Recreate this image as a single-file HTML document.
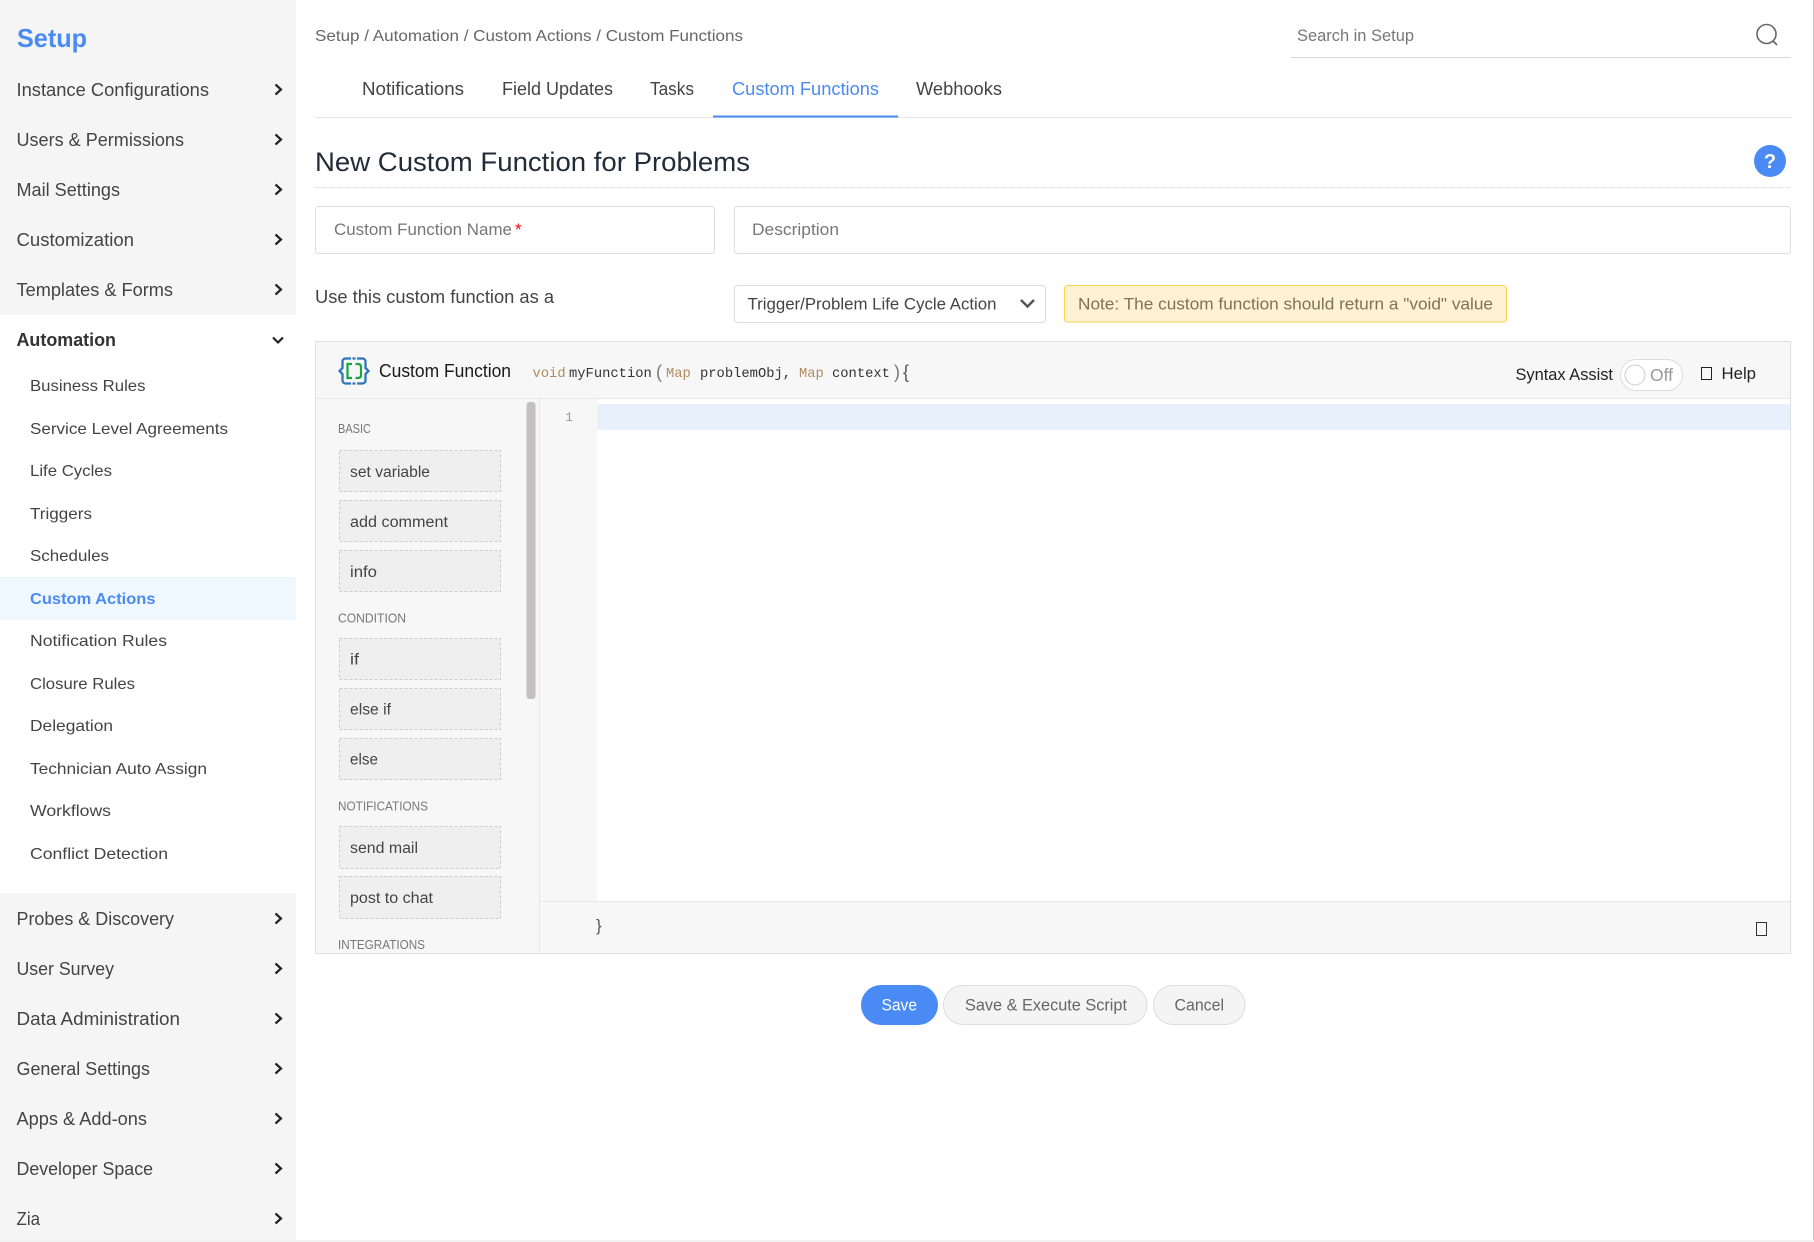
<!DOCTYPE html>
<html lang="en">
<head>
<meta charset="utf-8">
<title>New Custom Function for Problems</title>
<style>
html,body{margin:0;padding:0;background:#fff;width:1814px;height:1242px;overflow:hidden}
svg{display:block}
text{font-family:"Liberation Sans",sans-serif;white-space:pre}
.side{font-size:18.5px;fill:#444}
.sub{font-size:16px;fill:#444}
.tab{font-size:18.5px;fill:#444}
.ph{font-size:16.5px;fill:#777}
.lab{font-size:12.5px;fill:#777}
.itm{font-size:15.5px;fill:#444}
.mono{font-family:"Liberation Mono",monospace;font-size:13.8px;fill:#333}
.kw{fill:#b08a5e}
.box{fill:#efefef;stroke:#ccc;stroke-width:1;stroke-dasharray:3 2}
.chev{fill:none;stroke:#222;stroke-width:2.2}
</style>
</head>
<body>
<svg xmlns="http://www.w3.org/2000/svg" width="1814" height="1242" viewBox="0 0 1814 1242">
<rect width="1814" height="1242" fill="#fff"/>
<!-- sidebar -->
<rect x="0" y="0" width="296" height="315" fill="#f5f5f5"/>
<rect x="0" y="893" width="296" height="349" fill="#f5f5f5"/>
<rect x="0" y="577" width="296" height="43" fill="#f0f8ff"/>
<text x="17" y="47" font-size="26px" font-weight="bold" fill="#4a8af4" textLength="70" lengthAdjust="spacingAndGlyphs">Setup</text>
<text class="side" x="16.5" y="96" textLength="192.5" lengthAdjust="spacingAndGlyphs">Instance Configurations</text>
<text class="side" x="16.5" y="146" textLength="167.5" lengthAdjust="spacingAndGlyphs">Users &amp; Permissions</text>
<text class="side" x="16.5" y="196" textLength="103.5" lengthAdjust="spacingAndGlyphs">Mail Settings</text>
<text class="side" x="16.5" y="246" textLength="117.5" lengthAdjust="spacingAndGlyphs">Customization</text>
<text class="side" x="16.5" y="296" textLength="156.5" lengthAdjust="spacingAndGlyphs">Templates &amp; Forms</text>
<text class="side" x="16.5" y="346" font-weight="bold" style="fill:#333" textLength="99.5" lengthAdjust="spacingAndGlyphs">Automation</text>
<text class="sub" x="30" y="391" textLength="115.5" lengthAdjust="spacingAndGlyphs">Business Rules</text>
<text class="sub" x="30" y="434" textLength="198" lengthAdjust="spacingAndGlyphs">Service Level Agreements</text>
<text class="sub" x="30" y="476" textLength="82" lengthAdjust="spacingAndGlyphs">Life Cycles</text>
<text class="sub" x="30" y="519" textLength="62" lengthAdjust="spacingAndGlyphs">Triggers</text>
<text class="sub" x="30" y="561" textLength="79" lengthAdjust="spacingAndGlyphs">Schedules</text>
<text class="sub" x="30" y="604" font-weight="bold" style="fill:#4a8af4" textLength="125.5" lengthAdjust="spacingAndGlyphs">Custom Actions</text>
<text class="sub" x="30" y="646" textLength="137" lengthAdjust="spacingAndGlyphs">Notification Rules</text>
<text class="sub" x="30" y="689" textLength="105" lengthAdjust="spacingAndGlyphs">Closure Rules</text>
<text class="sub" x="30" y="731" textLength="83" lengthAdjust="spacingAndGlyphs">Delegation</text>
<text class="sub" x="30" y="774" textLength="177" lengthAdjust="spacingAndGlyphs">Technician Auto Assign</text>
<text class="sub" x="30" y="816" textLength="81" lengthAdjust="spacingAndGlyphs">Workflows</text>
<text class="sub" x="30" y="859" textLength="138" lengthAdjust="spacingAndGlyphs">Conflict Detection</text>
<text class="side" x="16.5" y="925" textLength="157.5" lengthAdjust="spacingAndGlyphs">Probes &amp; Discovery</text>
<text class="side" x="16.5" y="975" textLength="97.5" lengthAdjust="spacingAndGlyphs">User Survey</text>
<text class="side" x="16.5" y="1025" textLength="163.5" lengthAdjust="spacingAndGlyphs">Data Administration</text>
<text class="side" x="16.5" y="1075" textLength="133.5" lengthAdjust="spacingAndGlyphs">General Settings</text>
<text class="side" x="16.5" y="1125" textLength="130.5" lengthAdjust="spacingAndGlyphs">Apps &amp; Add-ons</text>
<text class="side" x="16.5" y="1175" textLength="136.5" lengthAdjust="spacingAndGlyphs">Developer Space</text>
<text class="side" x="16.5" y="1225" textLength="23.5" lengthAdjust="spacingAndGlyphs">Zia</text>
<g class="chev">
<path d="M275.500 84.500l5.500 5-5.500 5"/><path d="M275.500 134.500l5.500 5-5.500 5"/><path d="M275.500 184.500l5.500 5-5.500 5"/><path d="M275.500 234.500l5.500 5-5.500 5"/><path d="M275.500 284.500l5.500 5-5.500 5"/>
<path d="M273 337.500l5 5 5-5"/>
<path d="M275.500 913.500l5.500 5-5.500 5"/><path d="M275.500 963.500l5.500 5-5.500 5"/><path d="M275.500 1013.500l5.500 5-5.500 5"/><path d="M275.500 1063.500l5.500 5-5.500 5"/><path d="M275.500 1113.500l5.500 5-5.500 5"/><path d="M275.500 1163.500l5.500 5-5.500 5"/><path d="M275.500 1213.500l5.500 5-5.500 5"/>
</g>
<!-- top -->
<text x="315" y="41" font-size="16px" fill="#666" textLength="428" lengthAdjust="spacingAndGlyphs">Setup / Automation / Custom Actions / Custom Functions</text>
<text x="1297" y="41" class="ph" textLength="117" lengthAdjust="spacingAndGlyphs">Search in Setup</text>
<rect x="1291" y="57" width="500" height="1" fill="#d8d8d8"/>
<circle cx="1766.500" cy="34" r="9.500" fill="none" stroke="#666" stroke-width="1.600"/>
<path d="M1773 41l4 4" stroke="#666" stroke-width="1.600" fill="none"/>
<text class="tab" x="362" y="95" textLength="102" lengthAdjust="spacingAndGlyphs">Notifications</text>
<text class="tab" x="502" y="95" textLength="111" lengthAdjust="spacingAndGlyphs">Field Updates</text>
<text class="tab" x="650" y="95" textLength="44" lengthAdjust="spacingAndGlyphs">Tasks</text>
<text class="tab" x="732" y="95" style="fill:#4a8af4" textLength="147" lengthAdjust="spacingAndGlyphs">Custom Functions</text>
<text class="tab" x="916" y="95" textLength="86" lengthAdjust="spacingAndGlyphs">Webhooks</text>
<rect x="315" y="117" width="1476" height="1" fill="#e6e6e6"/>
<rect x="713" y="115.500" width="185" height="2" fill="#4a8af4"/>
<text x="315" y="171" font-size="27px" fill="#222c38" textLength="435" lengthAdjust="spacingAndGlyphs">New Custom Function for Problems</text>
<line x1="315" y1="187.500" x2="1791" y2="187.500" stroke="#d4d4d4" stroke-width="1" stroke-dasharray="1 1"/>
<circle cx="1770" cy="161" r="16" fill="#4a8af4"/>
<text x="1770" y="168" font-size="20px" font-weight="bold" fill="#fff" text-anchor="middle">?</text>
<!-- inputs -->
<rect x="315.500" y="206.500" width="399" height="47" rx="3" fill="#fff" stroke="#ddd"/>
<text class="ph" x="334" y="235" textLength="178" lengthAdjust="spacingAndGlyphs">Custom Function Name</text>
<text x="515" y="235" font-size="17px" fill="#f00">*</text>
<rect x="734.500" y="206.500" width="1056" height="47" rx="3" fill="#fff" stroke="#ddd"/>
<text class="ph" x="752" y="235" textLength="87" lengthAdjust="spacingAndGlyphs">Description</text>
<text x="315" y="303" font-size="18px" fill="#444" textLength="239" lengthAdjust="spacingAndGlyphs">Use this custom function as a</text>
<rect x="734.500" y="285.500" width="311" height="37" rx="3" fill="#fff" stroke="#ddd"/>
<text x="747.500" y="309.500" font-size="16.500px" fill="#444" textLength="249" lengthAdjust="spacingAndGlyphs">Trigger/Problem Life Cycle Action</text>
<path d="M1021 300l6.500 6.500 6.500-6.500" fill="none" stroke="#555" stroke-width="2.400"/>
<rect x="1064.500" y="285.500" width="442" height="36.500" rx="3" fill="#fff2d2" stroke="#fdd34f"/>
<text x="1078" y="309.500" font-size="16.500px" fill="#7e7358" textLength="415" lengthAdjust="spacingAndGlyphs">Note: The custom function should return a "void" value</text>
<!-- editor -->
<rect x="315.500" y="341.500" width="1475" height="612" fill="#f7f7f7" stroke="#e0e0e0"/>
<rect x="316" y="398" width="1474" height="1" fill="#e8e8e8"/>
<rect x="597.500" y="399" width="1192.500" height="502" fill="#fff"/>
<rect x="597.500" y="404" width="1192.500" height="26" fill="#e8f1fb"/>
<rect x="539" y="399" width="1" height="554" fill="#e8e8e8"/>
<rect x="540" y="901" width="1250" height="1" fill="#e8e8e8"/>
<rect x="526.500" y="402" width="9" height="297" rx="3" fill="#c2c1bf"/>
<!-- logo -->
<g fill="none" stroke="#2f74bd" stroke-width="2.300">
<path d="M351 358.500h-5.500a3 3 0 0 0-3 3v6.500l-3 3 3 3v6.500a3 3 0 0 0 3 3h5.500"/>
<path d="M357 358.500h5.500a3 3 0 0 1 3 3v6.500l3 3-3 3v6.500a3 3 0 0 1-3 3h-5.500"/>
<path d="M352.500 358.500h3M352.500 383.500h3"/>
</g>
<path d="M352 364h-4.500v14h4.500M355.500 364h2.500q3 0 3 3v8q0 3-3 3h-2.500" fill="none" stroke="#16a34a" stroke-width="2.200"/>
<text x="379" y="377" font-size="18px" fill="#1a1a1a" textLength="132" lengthAdjust="spacingAndGlyphs">Custom Function</text>
<text class="mono kw" x="532.500" y="377">void</text>
<text class="mono" x="569" y="377">myFunction</text>
<text x="656" y="378" font-size="18px" fill="#777">(</text>
<text class="mono kw" x="666" y="377">Map</text>
<text class="mono" x="700" y="377">problemObj,</text>
<text class="mono kw" x="799" y="377">Map</text>
<text class="mono" x="832" y="377">context</text>
<text x="894" y="378" font-size="18px" fill="#777">)</text>
<text x="903" y="378" font-size="18px" fill="#555">{</text>
<text x="1515.500" y="380" font-size="17px" fill="#222" textLength="97.500" lengthAdjust="spacingAndGlyphs">Syntax Assist</text>
<rect x="1620.500" y="359.500" width="62" height="31" rx="15.500" fill="#fff" stroke="#ddd"/>
<circle cx="1635" cy="375" r="10" fill="#fff" stroke="#ccc"/>
<text x="1650" y="381" font-size="17.500px" fill="#999" textLength="23" lengthAdjust="spacingAndGlyphs">Off</text>
<rect x="1701.500" y="367.500" width="10" height="12" fill="none" stroke="#222"/>
<text x="1721.500" y="379" font-size="17px" fill="#222" textLength="34.500" lengthAdjust="spacingAndGlyphs">Help</text>
<text x="569" y="421" text-anchor="middle" font-size="13px" fill="#999" style="font-family:'Liberation Mono',monospace">1</text>
<text x="596" y="931" font-size="17px" fill="#555">}</text>
<rect x="1756.500" y="922.500" width="10" height="13" fill="none" stroke="#333"/>
<!-- palette -->
<text class="lab" x="338" y="433" textLength="33" lengthAdjust="spacingAndGlyphs">BASIC</text>
<rect class="box" x="339.500" y="450.500" width="161" height="41"/>
<text class="itm" x="350" y="477" textLength="80" lengthAdjust="spacingAndGlyphs">set variable</text>
<rect class="box" x="339.500" y="500.500" width="161" height="41"/>
<text class="itm" x="350" y="527" textLength="98" lengthAdjust="spacingAndGlyphs">add comment</text>
<rect class="box" x="339.500" y="550.500" width="161" height="41"/>
<text class="itm" x="350" y="577" textLength="27" lengthAdjust="spacingAndGlyphs">info</text>
<text class="lab" x="338" y="622.500" textLength="68" lengthAdjust="spacingAndGlyphs">CONDITION</text>
<rect class="box" x="339.500" y="638.500" width="161" height="41"/>
<text class="itm" x="350" y="664.500" textLength="9" lengthAdjust="spacingAndGlyphs">if</text>
<rect class="box" x="339.500" y="688.500" width="161" height="41"/>
<text class="itm" x="350" y="714.500" textLength="41" lengthAdjust="spacingAndGlyphs">else if</text>
<rect class="box" x="339.500" y="738.500" width="161" height="41"/>
<text class="itm" x="350" y="764.500" textLength="28" lengthAdjust="spacingAndGlyphs">else</text>
<text class="lab" x="338" y="810.500" textLength="90" lengthAdjust="spacingAndGlyphs">NOTIFICATIONS</text>
<rect class="box" x="339.500" y="826.500" width="161" height="42"/>
<text class="itm" x="350" y="853" textLength="68" lengthAdjust="spacingAndGlyphs">send mail</text>
<rect class="box" x="339.500" y="876.500" width="161" height="42"/>
<text class="itm" x="350" y="903" textLength="83" lengthAdjust="spacingAndGlyphs">post to chat</text>
<text class="lab" x="338" y="949" textLength="87" lengthAdjust="spacingAndGlyphs">INTEGRATIONS</text>
<!-- buttons -->
<rect x="861" y="985" width="77" height="40" rx="20" fill="#4a8af4"/>
<text x="881.500" y="1010.500" font-size="16.500px" fill="#fff" textLength="35.500" lengthAdjust="spacingAndGlyphs">Save</text>
<rect x="943.500" y="985.500" width="203.500" height="39" rx="19.500" fill="#f4f4f4" stroke="#ddd"/>
<text x="965" y="1010.500" font-size="16.500px" fill="#666" textLength="162" lengthAdjust="spacingAndGlyphs">Save &amp; Execute Script</text>
<rect x="1153.500" y="985.500" width="91.500" height="39" rx="19.500" fill="#f4f4f4" stroke="#ddd"/>
<text x="1174.500" y="1010.500" font-size="16.500px" fill="#666" textLength="49.500" lengthAdjust="spacingAndGlyphs">Cancel</text>
<rect x="1813" y="0" width="1" height="1242" fill="#c8c8c8"/>
<rect x="0" y="1240" width="1814" height="2" fill="#f2f2f2"/>
</svg>
</body>
</html>
